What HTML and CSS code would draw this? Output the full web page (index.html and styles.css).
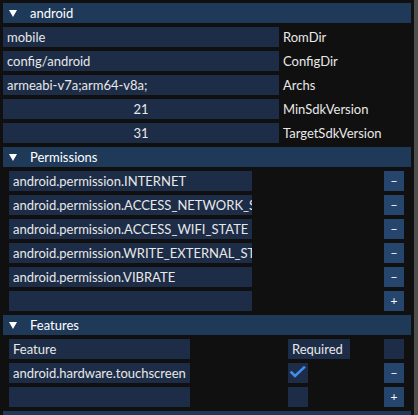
FILE: index.html
```html
<!DOCTYPE html>
<html>
<head>
<meta charset="utf-8">
<link rel="stylesheet" href="styles.css">
</head>
<body>
<div class="window">
  <div class="content">
    <div class="header"><span class="tri"></span><span>android</span></div>
    <div class="prop"><div class="field">mobile</div><div class="label">RomDir</div></div>
    <div class="prop"><div class="field">config/android</div><div class="label">ConfigDir</div></div>
    <div class="prop"><div class="field">armeabi-v7a;arm64-v8a;</div><div class="label">Archs</div></div>
    <div class="prop"><div class="field num">21</div><div class="label">MinSdkVersion</div></div>
    <div class="prop"><div class="field num">31</div><div class="label">TargetSdkVersion</div></div>

    <div class="header"><span class="tri"></span><span>Permissions</span></div>
    <div class="perm"><div class="field">android.permission.INTERNET</div><div class="btn">−</div></div>
    <div class="perm"><div class="field">android.permission.ACCESS_NETWORK_STATE</div><div class="btn">−</div></div>
    <div class="perm"><div class="field">android.permission.ACCESS_WIFI_STATE</div><div class="btn">−</div></div>
    <div class="perm"><div class="field">android.permission.WRITE_EXTERNAL_STORAGE</div><div class="btn">−</div></div>
    <div class="perm"><div class="field">android.permission.VIBRATE</div><div class="btn">−</div></div>
    <div class="perm"><div class="field"></div><div class="btn">+</div></div>

    <div class="header"><span class="tri"></span><span>Features</span></div>
    <div class="feat">
      <div class="field feat-name">Feature</div>
      <div class="field req">Required</div>
      <div class="field sq"></div>
    </div>
    <div class="feat">
      <div class="field feat-name">android.hardware.touchscreen</div>
      <div class="field sq"><svg width="20" height="20" viewBox="0 0 20 20"><polyline points="3.5,9.5 7,13 16,4.5" fill="none" stroke="#3d8ef0" stroke-width="2.6" stroke-linecap="square"/></svg></div>
      <div class="btn">−</div>
    </div>
    <div class="feat">
      <div class="field feat-name"></div>
      <div class="field sq"></div>
      <div class="btn">+</div>
    </div>
    <div class="header"></div>
  </div>
  <div class="scroll"></div>
</div>
</body>
</html>
```

FILE: styles.css
```css
html, body {
  margin: 0;
  padding: 0;
  background: #101010;
}
body {
  font-family: "Lato", "Noto Sans", sans-serif;
  font-size: 13px;
  color: #e8e8e8;
  overflow: hidden;
  height: 415px;
}
.window {
  display: flex;
  height: 415px;
}
.content {
  width: 408px;
  padding: 3px 0 0 3px;
  display: flex;
  flex-direction: column;
  gap: 4px;
  overflow: hidden;
}
.scroll {
  margin-left: 3px;
  width: 4px;
  background: #4e4e4e;
}
.header {
  height: 20px;
  min-height: 20px;
  background: #1f3a59;
  display: flex;
  align-items: center;
  color: #ffffff;
}
.tri {
  width: 0;
  height: 0;
  border-left: 4px solid transparent;
  border-right: 4px solid transparent;
  border-top: 7px solid #ffffff;
  margin: 0 13px 0 6px;
}
.field {
  height: 20px;
  background: #1d2d47;
  box-sizing: border-box;
  padding: 0 4px;
  line-height: 20px;
  white-space: nowrap;
  overflow: hidden;
}
.num {
  text-align: center;
}
.prop {
  display: grid;
  grid-template-columns: 276px auto;
  column-gap: 4px;
}
.label {
  line-height: 20px;
}
.perm {
  display: grid;
  grid-template-columns: 243px 1fr 20px;
  padding: 0 7px 0 6px;
}
.perm .btn {
  grid-column: 3;
}
.btn {
  width: 20px;
  height: 20px;
  background: #25456d;
  color: #ffffff;
  font-size: 12px;
  line-height: 20px;
  text-align: center;
}
.feat {
  display: grid;
  grid-template-columns: 279px 96px 20px;
  padding-left: 6px;
}
.feat-name {
  width: 181px;
}
.req {
  width: 62px;
}
.sq {
  width: 20px;
  padding: 0;
}
.sq svg {
  display: block;
}
```
